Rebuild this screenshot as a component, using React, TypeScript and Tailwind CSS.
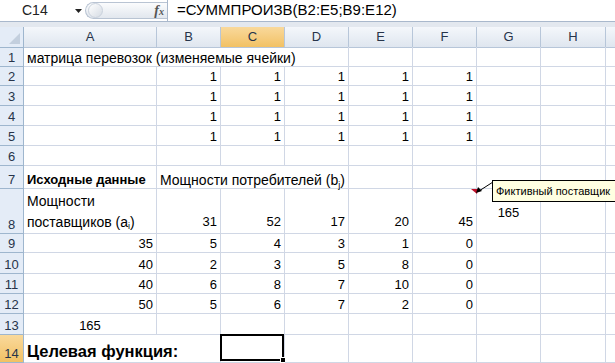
import React from "react";

type Cell = {
  v?: React.ReactNode;
  span?: number;
  al?: "l" | "r" | "c";
  cls?: string;
  sel?: boolean;
};

type Row = { n: number; h: string; cells: Cell[]; active?: boolean };

const gridCols = "grid grid-cols-[24px_133px_64px_64px_64px_64px_64px_64px_65px_1fr]";

const nums = (vals: string[]): Cell[] => vals.map((v) => ({ v, al: "r" as const }));
const empty = (k: number): Cell[] => Array.from({ length: k }, () => ({}));

const rows: Row[] = [
  {
    n: 1,
    h: "h-[20px]",
    cells: [{ v: "матрица перевозок (изменяемые ячейки)", span: 4, cls: "text-[14px]" }, ...empty(4)],
  },
  { n: 2, h: "h-[19px]", cells: [{}, ...nums(["1", "1", "1", "1", "1"]), ...empty(2)] },
  { n: 3, h: "h-[20px]", cells: [{}, ...nums(["1", "1", "1", "1", "1"]), ...empty(2)] },
  { n: 4, h: "h-[20px]", cells: [{}, ...nums(["1", "1", "1", "1", "1"]), ...empty(2)] },
  { n: 5, h: "h-[20px]", cells: [{}, ...nums(["1", "1", "1", "1", "1"]), ...empty(2)] },
  { n: 6, h: "h-[20px]", cells: empty(8) },
  {
    n: 7,
    h: "h-[23px]",
    cells: [
      { v: "Исходные данные", cls: "font-bold" },
      {
        v: (
          <>
            Мощности потребителей (b<sub className="text-[9px] leading-none">j</sub>)
          </>
        ),
        span: 3,
        cls: "text-[14px]",
      },
      ...empty(4),
    ],
  },
  {
    n: 8,
    h: "h-[45px]",
    cells: [
      {
        v: (
          <span className="block leading-[21px] whitespace-normal">
            Мощности
            <br />
            поставщиков (a<sub className="text-[9px] leading-none">i</sub>)
          </span>
        ),
        cls: "text-[14px]",
      },
      ...nums(["31", "52", "17", "20", "45"]).map((c) => ({ ...c, cls: "pb-[3px]" })),
      { v: "165", al: "c", cls: "!items-center pt-[3px]" },
      {},
    ],
  },
  { n: 9, h: "h-[19px]", cells: [...nums(["35", "5", "4", "3", "1", "0"]), ...empty(2)] },
  { n: 10, h: "h-[21px]", cells: [...nums(["40", "2", "3", "5", "8", "0"]), ...empty(2)] },
  { n: 11, h: "h-[20px]", cells: [...nums(["40", "6", "8", "7", "10", "0"]), ...empty(2)] },
  { n: 12, h: "h-[20px]", cells: [...nums(["50", "5", "6", "7", "2", "0"]), ...empty(2)] },
  { n: 13, h: "h-[21px]", cells: [{ v: "165", al: "c" }, ...empty(7)] },
  {
    n: 14,
    h: "h-[28px]",
    active: true,
    cells: [
      { v: "Целевая функция:", span: 2, cls: "font-bold text-[16.5px] leading-[22px]" },
      { sel: true },
      ...empty(5),
    ],
  },
];

const spanCls: Record<number, string> = { 1: "", 2: "col-span-2", 3: "col-span-3", 4: "col-span-4" };
const alCls = { l: "justify-start pl-[3px]", r: "justify-end pr-[3px]", c: "justify-center" };

function SheetRow({ row }: { row: Row }) {
  return (
    <div className={`${gridCols} ${row.h}`}>
      <div
        className={`flex items-end justify-center border-r border-b border-[#9eb6ce] text-[#27344a] leading-[16px] ${
          row.active ? "bg-gradient-to-b from-[#f9d99b] to-[#f2c163]" : "bg-[#e4ecf7]"
        }`}
      >
        {row.n}
      </div>
      {row.cells.map((c, i) => (
        <div
          key={i}
          className={`relative flex items-end whitespace-nowrap border-r border-b border-[#d0d7e5] leading-[16px] ${
            spanCls[c.span ?? 1]
          } ${alCls[c.al ?? "l"]} ${c.cls ?? ""}`}
        >
          {c.v}
          {c.sel && (
            <div className="absolute -left-[1px] -top-[1px] right-0 bottom-[1px] border-2 border-black">
              <div className="absolute -right-[4px] -bottom-[4px] h-[6px] w-[6px] border border-white bg-black" />
            </div>
          )}
        </div>
      ))}
      <div className="border-b border-[#d0d7e5]" />
    </div>
  );
}

export default function App() {
  const letters = ["A", "B", "C", "D", "E", "F", "G", "H"];
  return (
    <div className="relative h-[363px] w-[615px] overflow-hidden bg-white font-['Liberation_Sans',Arial,sans-serif] text-[13px] text-black">
      {/* formula bar */}
      <div className="flex h-[22px] border-b border-[#a9b8cc] bg-white">
        <div className="flex w-[85px] items-center">
          <span className="pl-[22px] text-[14px] text-[#222]">C14</span>
          <svg className="ml-[27px]" width="7" height="4" viewBox="0 0 7 4">
            <path d="M0 0 L7 0 L3.5 4 Z" fill="#222" />
          </svg>
        </div>
        <div className="my-[2px] flex w-[82px] items-center rounded-l-full border border-r-0 border-[#b9c4d3] bg-gradient-to-b from-[#fbfcfd] to-[#e2e7ee]">
          <div className="ml-[2px] h-[15px] w-[15px] rounded-full border border-[#c9d1dc] bg-gradient-to-br from-white to-[#d6dce4]" />
          <span className="ml-auto mr-[3px] font-['Liberation_Serif',serif] text-[14px] font-bold italic text-[#555]">
            f<span className="text-[10px]">x</span>
          </span>
        </div>
        <div className="flex flex-1 items-center border-l border-[#a9b8cc] pl-[9px] text-[15px]">
          =СУММПРОИЗВ(B2:E5;B9:E12)
        </div>
      </div>
      <div className="h-[5px] bg-[#e3e8ef]" />

      {/* column headers */}
      <div className={`${gridCols} h-[20px]`}>
        <div className="relative border-r border-b border-[#9eb6ce] bg-[#e4ecf7]">
          <svg className="absolute right-[3px] bottom-[3px]" width="11" height="11" viewBox="0 0 11 11">
            <path d="M11 0 L11 11 L0 11 Z" fill="#c3cfde" />
          </svg>
        </div>
        {letters.map((l) => (
          <div
            key={l}
            className={`flex items-center justify-center border-r border-b border-[#b7c6d9] text-[#27344a] ${
              l === "C"
                ? "bg-gradient-to-b from-[#f9d99b] to-[#f2c163]"
                : "bg-gradient-to-b from-[#f4f7fb] to-[#dfe6ef]"
            }`}
          >
            {l}
          </div>
        ))}
        <div className="border-b border-[#b7c6d9] bg-gradient-to-b from-[#f4f7fb] to-[#dfe6ef]" />
      </div>

      {rows.map((r) => (
        <SheetRow key={r.n} row={r} />
      ))}

      {/* comment marker, arrow and note */}
      <svg className="absolute left-[470px] top-[181px]" width="24" height="15" viewBox="0 0 24 15">
        <path d="M1 8 L8 8 L7 13 Z" fill="#c0102a" />
        <line x1="23" y1="1" x2="9" y2="10" stroke="#000" strokeWidth="1" />
        <path d="M6 12 L8 6 L12 10 Z" fill="#000" />
      </svg>
      <div className="absolute left-[492px] top-[180px] flex h-[22px] w-[130px] items-center border border-black bg-[#ffffe1] pl-[3px] text-[11px] whitespace-nowrap">
        Фиктивный поставщик
      </div>
    </div>
  );
}
